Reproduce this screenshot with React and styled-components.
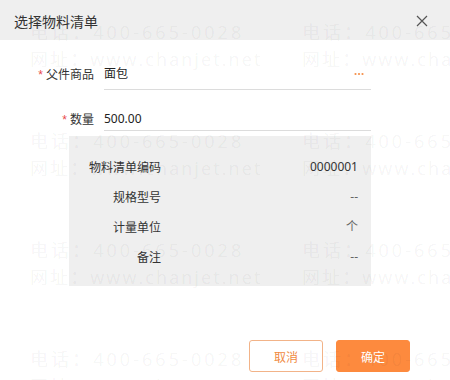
import React from "react";
import styled, { createGlobalStyle } from "styled-components";

const Global = createGlobalStyle`
  html, body { margin: 0; padding: 0; background: #fff; }
  body { font-family: "Noto Sans", "Noto Sans CJK SC", sans-serif; color: #333; }
  * { box-sizing: border-box; }
`;

const Page = styled.div`
  position: relative;
  width: 450px;
  height: 380px;
  overflow: hidden;
  background: #fff;
  display: flex;
  flex-direction: column;
`;

const Header = styled.div`
  height: 40px;
  flex: none;
  background: #efefef;
  display: flex;
  align-items: center;
  justify-content: space-between;
  padding: 0 22px 0 14px;
`;

const Title = styled.div`
  font-family: "Noto Sans CJK SC", sans-serif;
  font-size: 14px;
  line-height: 20px;
  color: #333;
  margin-top: 2px;
`;

const Close = styled.svg`
  width: 12px;
  height: 12px;
  margin-top: 2px;
`;

const Form = styled.div`
  display: flex;
  flex-direction: column;
  padding-top: 18px;
  width: 371px;
`;

const Row = styled.div`
  display: grid;
  grid-template-columns: 94px 267px;
  column-gap: 10px;
  align-items: center;
  margin-bottom: ${(p) => p.$mb || 0}px;
`;

const Label = styled.div`
  text-align: right;
  font-family: "Noto Sans CJK SC", sans-serif;
  font-size: 12px;
  line-height: 16px;
  color: #333;
  margin-top: ${(p) => p.$mt || 0}px;
`;

const Star = styled.span`
  color: #e8484b;
  margin-right: 3px;
  font-family: "Liberation Sans", sans-serif;
  font-size: 12px;
`;

const Field = styled.div`
  height: ${(p) => p.$h}px;
  border-bottom: 1px solid #dcdcdc;
  display: flex;
  align-items: center;
  justify-content: space-between;
  padding: ${(p) => p.$pt || 0}px 7px 0 0;
  font-size: 12px;
  color: #222;
`;

const Value = styled.span`
  font-size: 12px;
  line-height: 16px;
`;

const Dots = styled.svg`
  width: 10px;
  height: 4px;
`;

const Panel = styled.div`
  margin: 5px 0 0 69px;
  width: 302px;
  background: #efefef;
  padding: 16px 13px 14px 20px;
  display: flex;
  flex-direction: column;
`;

const InfoRow = styled.div`
  height: 30px;
  display: grid;
  grid-template-columns: 72px 1fr;
  align-items: center;
  font-size: 12px;
  line-height: 16px;
`;

const InfoLabel = styled.span`
  text-align: right;
  font-family: "Noto Sans CJK SC", sans-serif;
  color: #333;
`;

const InfoValue = styled.span`
  text-align: right;
  color: ${(p) => (p.$muted ? "#666" : "#333")};
  font-family: "Noto Sans", "Noto Sans CJK SC", sans-serif;
`;

const Footer = styled.div`
  margin-top: auto;
  display: flex;
  justify-content: flex-end;
  gap: 13px;
  padding: 0 40px 8px 0;
`;

const Button = styled.button`
  width: 74px;
  height: 32px;
  border-radius: 3px;
  font-family: "Noto Sans CJK SC", sans-serif;
  font-size: 12px;
  cursor: pointer;
  border: 1px solid ${(p) => (p.$primary ? "#fd8a3e" : "#f2b388")};
  background: ${(p) => (p.$primary ? "#fd8a3e" : "#fff")};
  color: ${(p) => (p.$primary ? "#fff" : "#f08a42")};
  padding: 0;
`;

const Watermark = styled.div`
  position: absolute;
  inset: 0;
  pointer-events: none;
  display: grid;
  grid-template-columns: repeat(2, 272px);
  grid-auto-rows: 109px;
  padding: 19px 0 0 30px;
  z-index: 5;
`;

const Mark = styled.div`
  display: flex;
  flex-direction: column;
  font-family: "Open Sans", "Noto Sans CJK SC", sans-serif;
  font-size: 18px;
  line-height: 27px;
  color: rgba(0, 0, 0, 0.055);
  white-space: nowrap;
`;

const MarkLine = styled.span`
  letter-spacing: ${(p) => p.$ls}px;
`;

const infos = [
  { label: "物料清单编码", value: "0000001" },
  { label: "规格型号", value: "--", muted: true },
  { label: "计量单位", value: "个", muted: true },
  { label: "备注", value: "--", muted: true },
];

export default function App() {
  return (
    <Page>
      <Global />
      <Header>
        <Title>选择物料清单</Title>
        <Close viewBox="0 0 12 12">
          <path d="M1 1 L11 11 M11 1 L1 11" stroke="#555" strokeWidth="1.2" fill="none" />
        </Close>
      </Header>
      <Form>
        <Row $mb={12}>
          <Label>
            <Star>*</Star>父件商品
          </Label>
          <Field $h={32}>
            <Value>面包</Value>
            <Dots viewBox="0 0 10 4">
              <circle cx="1.5" cy="2" r="1.1" fill="#f5904a" />
              <circle cx="5" cy="2" r="1.1" fill="#f5904a" />
              <circle cx="8.5" cy="2" r="1.1" fill="#f5904a" />
            </Dots>
          </Field>
        </Row>
        <Row>
          <Label $mt={5}>
            <Star>*</Star>数量
          </Label>
          <Field $h={29} $pt={5}>
            <Value>500.00</Value>
          </Field>
        </Row>
        <Panel>
          {infos.map((it) => (
            <InfoRow key={it.label}>
              <InfoLabel>{it.label}</InfoLabel>
              <InfoValue $muted={it.muted}>{it.value}</InfoValue>
            </InfoRow>
          ))}
        </Panel>
      </Form>
      <Footer>
        <Button>取消</Button>
        <Button $primary>确定</Button>
      </Footer>
      <Watermark>
        {Array.from({ length: 8 }).map((_, i) => (
          <Mark key={i}>
            <MarkLine $ls={3.05}>电话：400-665-0028</MarkLine>
            <MarkLine $ls={2.1}>网址：www.chanjet.net</MarkLine>
          </Mark>
        ))}
      </Watermark>
    </Page>
  );
}
